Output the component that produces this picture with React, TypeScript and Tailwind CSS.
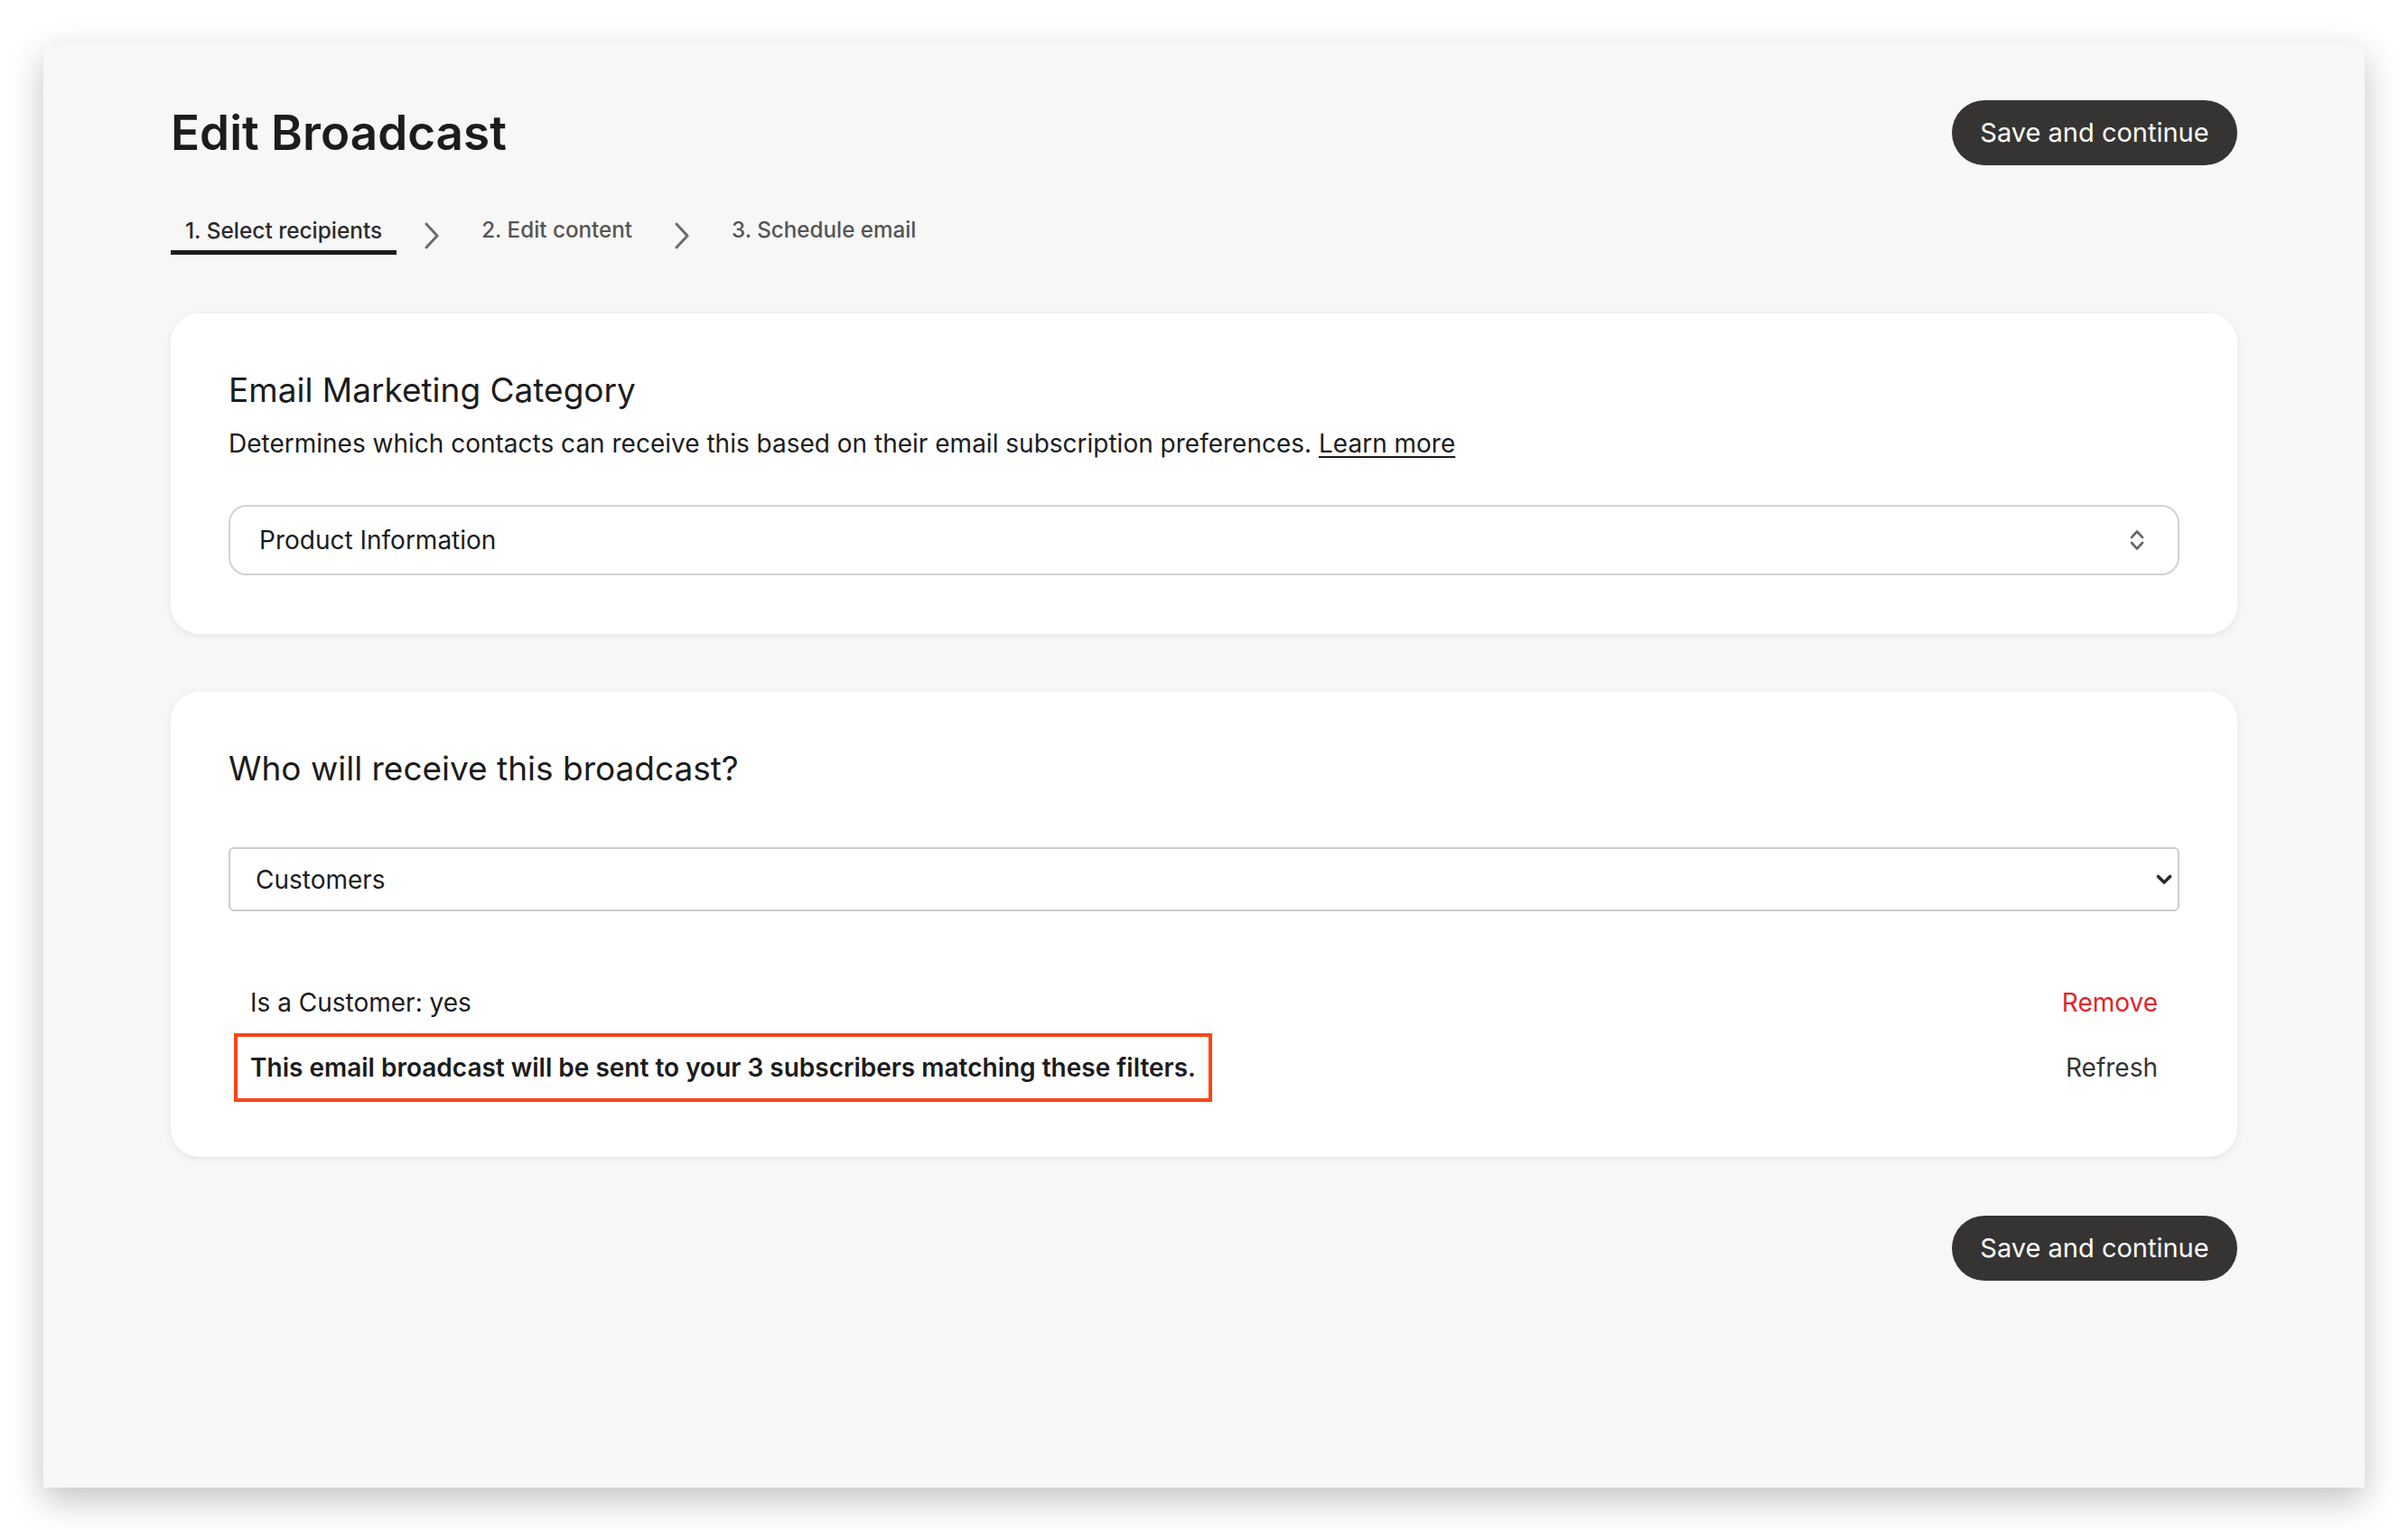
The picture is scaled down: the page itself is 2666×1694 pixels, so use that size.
function TabChevron() {
  return (
    <svg width="18" height="30" viewBox="0 0 18 30" fill="none" className="shrink-0">
      <path d="M3 2 L15 15 L3 28" stroke="#6b6b6b" strokeWidth="3" strokeLinecap="round" strokeLinejoin="round" />
    </svg>
  );
}

function UpDownIcon() {
  return (
    <svg width="16" height="24" viewBox="0 0 16 24" fill="none">
      <path d="M2 9 L8 2.5 L14 9" stroke="#666" strokeWidth="2.6" strokeLinecap="round" strokeLinejoin="round" />
      <path d="M2 15 L8 21.5 L14 15" stroke="#666" strokeWidth="2.6" strokeLinecap="round" strokeLinejoin="round" />
    </svg>
  );
}

function SelectArrow() {
  return (
    <svg width="18" height="12" viewBox="0 0 18 12" fill="none">
      <path d="M2.5 2.5 L9 9 L15.5 2.5" stroke="#2b2b2b" strokeWidth="3.6" strokeLinecap="round" strokeLinejoin="round" />
    </svg>
  );
}

function SaveButton() {
  return (
    <button className="flex h-[72px] w-[316px] items-center justify-center rounded-full bg-[#353432] text-[29px] text-white">
      Save and continue
    </button>
  );
}

const tabs = ['1. Select recipients', '2. Edit content', '3. Schedule email'];

export default function App() {
  return (
    <div className="min-h-screen bg-white p-[48px] font-['Inter',sans-serif] text-[#1c1c1c]">
      <div className="h-[1599px] w-[2570px] bg-[#f7f7f7] px-[141px] pt-[63px] shadow-[0_14px_36px_rgba(0,0,0,0.24)]">
        <header className="flex items-center justify-between">
          <h1 className="text-[53px] font-semibold leading-[64px] text-[#1c1c1c]">Edit Broadcast</h1>
          <SaveButton />
        </header>

        <nav className="mt-[56px] flex items-center gap-[30px]">
          {tabs.map((t, i) => (
            <div key={t} className="flex items-center gap-[30px]">
              {i > 0 && <TabChevron />}
              <div
                className={
                  i === 0
                    ? 'border-b-[5px] border-[#1c1c1c] px-[16px] pb-[6px] text-[24.4px] font-medium leading-[32px] text-[#2b2b2b]'
                    : 'border-b-[5px] border-transparent px-[16px] pb-[6px] text-[24.2px] font-medium leading-[32px] text-[#555555]'
                }
              >
                {t}
              </div>
            </div>
          ))}
        </nav>

        <section className="mt-[65px] rounded-[32px] bg-white px-[64px] pb-[65px] pt-[61px] shadow-[0_2px_8px_rgba(0,0,0,0.08)]">
          <h2 className="text-[37px] leading-[48px]">Email Marketing Category</h2>
          <p className="mt-[14px] text-[28px] leading-[42px]">
            Determines which contacts can receive this based on their email subscription preferences.{' '}
            <a href="#" className="underline underline-offset-4">Learn more</a>
          </p>
          <div className="mt-[47px] flex h-[78px] items-center justify-between rounded-[20px] border-2 border-[#d2d2d2] pl-[32px] pr-[37px]">
            <span className="text-[28px]">Product Information</span>
            <UpDownIcon />
          </div>
        </section>

        <section className="mt-[64px] rounded-[32px] bg-white px-[64px] pb-[61px] pt-[61px] shadow-[0_2px_8px_rgba(0,0,0,0.08)]">
          <h2 className="text-[37px] leading-[48px]">Who will receive this broadcast?</h2>
          <div className="mt-[63px] flex h-[71px] items-center justify-between rounded-[6px] border-2 border-[#cccccc] pl-[28px] pr-[6px]">
            <span className="text-[28px]">Customers</span>
            <SelectArrow />
          </div>
          <div className="mt-[81px] flex items-center justify-between px-[24px] text-[28px] leading-[40px]">
            <span>Is a Customer: yes</span>
            <span className="text-[#e0242b]">Remove</span>
          </div>
          <div className="mt-[14px] flex items-center justify-between pl-[6px] pr-[24px] text-[28px] leading-[40px]">
            <span className="border-4 border-[#fa4616] px-[14px] py-[14px] font-semibold">
              This email broadcast will be sent to your 3 subscribers matching these filters.
            </span>
            <span className="text-[#333333]">Refresh</span>
          </div>
        </section>

        <div className="mt-[65px] flex justify-end">
          <SaveButton />
        </div>
      </div>
    </div>
  );
}
